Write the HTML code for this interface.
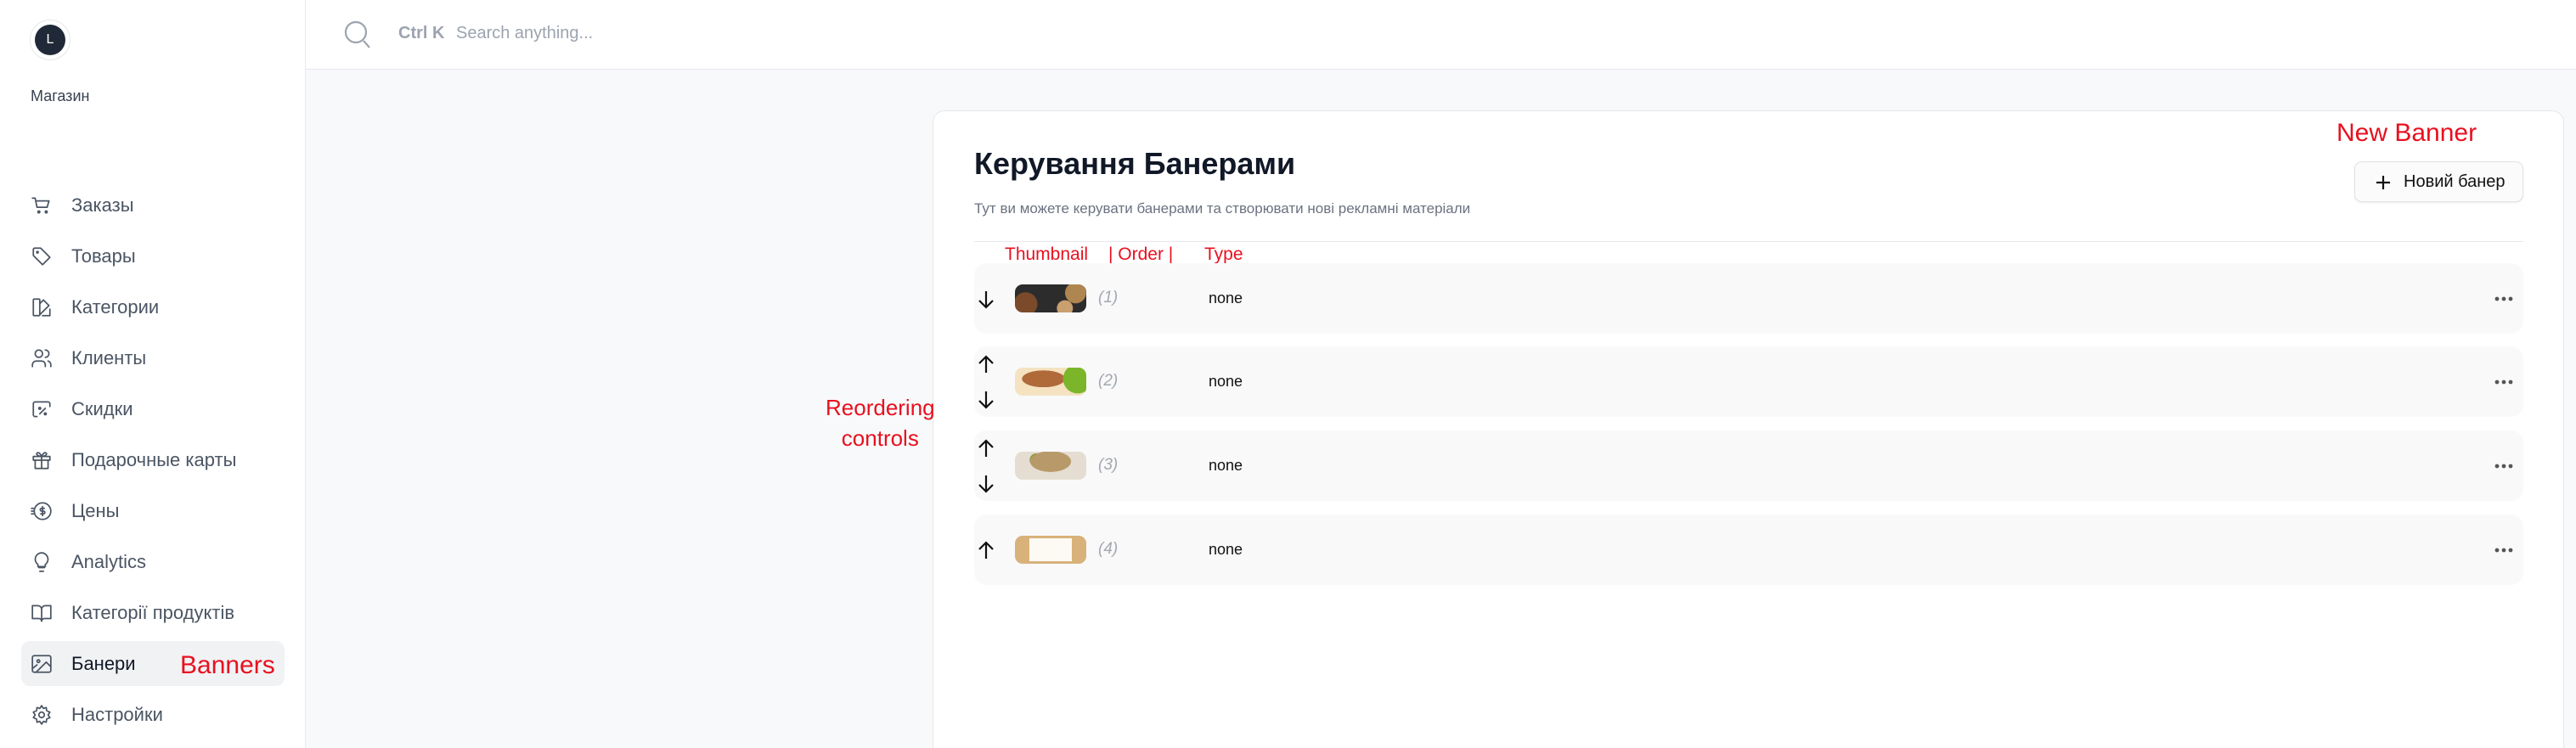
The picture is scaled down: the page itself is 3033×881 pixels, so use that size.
<!DOCTYPE html>
<html><head><meta charset="utf-8"><style>
*{margin:0;padding:0;box-sizing:border-box}
html,body{width:3033px;height:881px;overflow:hidden}
body{background:#f8f9fa;font-family:"Liberation Sans",sans-serif;position:relative}
.side{position:absolute;left:0;top:0;width:360px;height:881px;background:#fff;border-right:1px solid #e9eaec}
.top{position:absolute;left:360px;top:0;right:0;height:82px;background:#fff;border-bottom:1px solid #e5e7eb}
.av{position:absolute;left:35px;top:23px;width:48px;height:48px;border-radius:50%;border:1px solid #e5e7eb;background:#fff}
.av div{position:absolute;left:5px;top:5px;width:36px;height:36px;border-radius:50%;background:#1f2937;color:#fff;font-size:16px;text-align:center;line-height:36px}
.shop{position:absolute;left:36px;top:103px;font-size:18px;color:#374151}
.nav{position:absolute;left:25px;width:310px;height:53px;border-radius:10px}
.nav svg{position:absolute;left:11px;top:14px;width:26px;height:26px;fill:none;stroke:#4b5563;stroke-width:1.6;stroke-linecap:round;stroke-linejoin:round}
.nav span{position:absolute;left:59px;top:14px;font-size:22px;color:#4b5563}
.red{position:absolute;color:#e8101f;font-family:"Liberation Sans",sans-serif;white-space:nowrap}
.card{position:absolute;left:1098px;top:130px;width:1921px;height:751px;background:#fff;border:1px solid #e5e7eb;border-bottom:none;border-radius:14px 14px 0 0}
.row{position:absolute;left:1147px;width:1824px;height:83px;background:#f9f9fa;border-radius:14px}
.row .u,.row .d{position:absolute;left:4px;width:20px;height:22px}
.thumb{position:absolute;left:48px;top:25px;width:84px;height:33px;border-radius:9px;overflow:hidden}
.ord{position:absolute;left:146px;top:30px;font-size:19px;font-style:italic;color:#a3a8b0}
.none{position:absolute;left:276px;top:31px;font-size:18px;color:#111}
.dots{position:absolute;left:1790px;top:39px;width:22px;height:6px}
</style></head><body>
<div class="side">
<div class="av"><div>L</div></div>
<div class="shop">Магазин</div>

<div class="nav" style="top:215px"><svg viewBox="0 0 24 24"><path d="M2 4h3l2 10h11l2-7H7"/><circle cx="9" cy="19" r="1"/><circle cx="17" cy="19" r="1"/></svg><span>Заказы</span></div>
<div class="nav" style="top:275px"><svg viewBox="0 0 24 24"><path d="M3 4v7l10 10 8-8L11 3H4z"/><circle cx="7.5" cy="7.5" r=".8"/></svg><span>Товары</span></div>
<div class="nav" style="top:335px"><svg viewBox="0 0 24 24"><rect x="3" y="3" width="7" height="18" rx="1"/><path d="M10 8l4-4 6 6-10 10M13 21h8v-7"/></svg><span>Категории</span></div>
<div class="nav" style="top:395px"><svg viewBox="0 0 24 24"><circle cx="9" cy="7" r="4"/><path d="M2 21v-2a4 4 0 014-4h6a4 4 0 014 4v2M16 3a4 4 0 010 8M22 21v-2a4 4 0 00-3-4"/></svg><span>Клиенты</span></div>
<div class="nav" style="top:455px"><svg viewBox="0 0 24 24"><path d="M7 20H5a2 2 0 01-2-2V6a2 2 0 012-2h14a2 2 0 012 2v3M10 17l6-6"/><circle cx="10" cy="11" r="1"/><circle cx="16" cy="17" r="1"/></svg><span>Скидки</span></div>
<div class="nav" style="top:515px"><svg viewBox="0 0 24 24"><rect x="3" y="8" width="18" height="4"/><path d="M5 12v9h14v-9M12 8v13M12 8S10 3 7.5 4 8 8 12 8M12 8s2-5 4.5-4-.5 4-4.5 4"/></svg><span>Подарочные карты</span></div>
<div class="nav" style="top:575px"><svg viewBox="0 0 24 24"><circle cx="13" cy="12" r="9"/><path d="M15 9h-3a1.5 1.5 0 000 3h2a1.5 1.5 0 010 3h-3M13 7v10M1 9h2M1 12h2M1 15h2"/></svg><span>Цены</span></div>
<div class="nav" style="top:635px"><svg viewBox="0 0 24 24"><path d="M9 18h6M10 22h4M12 2a7 7 0 00-4 12.7V17h8v-2.3A7 7 0 0012 2z"/></svg><span>Analytics</span></div>
<div class="nav" style="top:695px"><svg viewBox="0 0 24 24"><path d="M2 4h6a4 4 0 014 4v13a3 3 0 00-3-3H2zM22 4h-6a4 4 0 00-4 4v13a3 3 0 013-3h7z"/></svg><span>Категорії продуктів</span></div>
<div class="nav" style="top:755px;background:#f1f2f4"><svg viewBox="0 0 24 24"><rect x="2" y="3" width="20" height="18" rx="2"/><circle cx="8.5" cy="9" r="1.5"/><path d="M22 15l-5-5-11 11M2 17l5-4"/></svg><span style="color:#111827">Банери</span></div>
<div class="nav" style="top:815px"><svg viewBox="0 0 24 24"><circle cx="12" cy="12" r="3"/><path d="M12 2l2 3 3-1 .5 3.5L21 9l-2 3 2 3-3.5 1.5L17 20l-3-1-2 3-2-3-3 1-.5-3.5L3 15l2-3-2-3 3.5-1.5L7 4l3 1z"/></svg><span>Настройки</span></div>
<div class="red" style="left:212px;top:767px;font-size:30px">Banners</div>
</div>

<div class="top">
<svg style="position:absolute;left:45px;top:24px" width="32" height="34" viewBox="0 0 32 34" fill="none" stroke="#9ca3af" stroke-width="2.2"><circle cx="14" cy="14" r="12"/><path d="M23 24l7 8"/></svg>
<div style="position:absolute;left:109px;top:28px;font-size:20px;font-weight:bold;color:#9ca3af">Ctrl K</div>
<div style="position:absolute;left:177px;top:28px;font-size:20px;color:#9ca3af">Search anything...</div>
</div>

<div class="card"></div>
<div class="red" style="left:972px;top:462px;font-size:26px;text-align:center;line-height:36px">Reordering<br>controls</div>
<div style="position:absolute;left:1147px;top:172px;font-size:36px;font-weight:bold;color:#111827">Керування Банерами</div>
<div style="position:absolute;left:1147px;top:236px;font-size:17px;color:#6b7280">Тут ви можете керувати банерами та створювати нові рекламні матеріали</div>
<div style="position:absolute;left:1147px;top:284px;width:1824px;height:1px;background:#e5e7eb"></div>
<div class="red" style="left:2751px;top:140px;font-size:30px">New Banner</div>
<div style="position:absolute;left:2772px;top:190px;width:199px;height:48px;border:1px solid #e2e3e6;border-radius:9px;background:#fbfbfb;box-shadow:0 1px 2px rgba(0,0,0,.08)">
<svg style="position:absolute;left:24px;top:15px" width="18" height="18" viewBox="0 0 18 18" stroke="#111" stroke-width="2.2"><path d="M9 1v16M1 9h16"/></svg>
<span style="position:absolute;left:57px;top:12px;font-size:20px;color:#111">Новий банер</span></div>
<div class="red" style="left:1183px;top:288px;font-size:21px">Thumbnail</div>
<div class="red" style="left:1305px;top:288px;font-size:21px">| Order |</div>
<div class="red" style="left:1418px;top:288px;font-size:21px">Type</div>

<svg width="0" height="0" style="position:absolute"><defs>
<symbol id="dn" viewBox="0 0 20 22"><path d="M10 1v19M2 12l8 8 8-8" fill="none" stroke="#111" stroke-width="2.2"/></symbol>
<symbol id="up" viewBox="0 0 20 22"><path d="M10 21V2M2 10l8-8 8 8" fill="none" stroke="#111" stroke-width="2.2"/></symbol>
<symbol id="dt" viewBox="0 0 22 6"><circle cx="3" cy="3" r="2.4" fill="#555"/><circle cx="11" cy="3" r="2.4" fill="#555"/><circle cx="19" cy="3" r="2.4" fill="#555"/></symbol>
</defs></svg>

<div class="row" style="top:310px"><svg class="d" style="top:32px"><use href="#dn"/></svg>
<div class="thumb" style="background:radial-gradient(circle at 15% 70%,#7a4a2a 0 18%,transparent 19%),radial-gradient(circle at 85% 30%,#b08650 0 16%,transparent 17%),radial-gradient(circle at 70% 85%,#c9a070 0 14%,transparent 15%),#2c2c2c"></div>
<div class="ord">(1)</div><div class="none">none</div><svg class="dots"><use href="#dt"/></svg></div>

<div class="row" style="top:408px"><svg class="u" style="top:10px"><use href="#up"/></svg><svg class="d" style="top:52px"><use href="#dn"/></svg>
<div class="thumb" style="background:radial-gradient(circle at 88% 40%,#7bb52a 0 22%,transparent 23%),radial-gradient(ellipse at 40% 40%,#b06a3a 0 35%,transparent 36%),#f5e2c0"></div>
<div class="ord">(2)</div><div class="none">none</div><svg class="dots"><use href="#dt"/></svg></div>

<div class="row" style="top:507px"><svg class="u" style="top:10px"><use href="#up"/></svg><svg class="d" style="top:52px"><use href="#dn"/></svg>
<div class="thumb" style="background:radial-gradient(ellipse at 50% 35%,#b89a6a 0 40%,transparent 41%),radial-gradient(circle at 30% 30%,#8a9a40 0 12%,transparent 13%),#e5ddd2"></div>
<div class="ord">(3)</div><div class="none">none</div><svg class="dots"><use href="#dt"/></svg></div>

<div class="row" style="top:606px"><svg class="u" style="top:31px"><use href="#up"/></svg>
<div class="thumb" style="background:#d8b27a"><div style="position:absolute;left:17px;top:3px;width:50px;height:27px;background:#fdfaf4"></div></div>
<div class="ord">(4)</div><div class="none">none</div><svg class="dots"><use href="#dt"/></svg></div>
</body></html>
